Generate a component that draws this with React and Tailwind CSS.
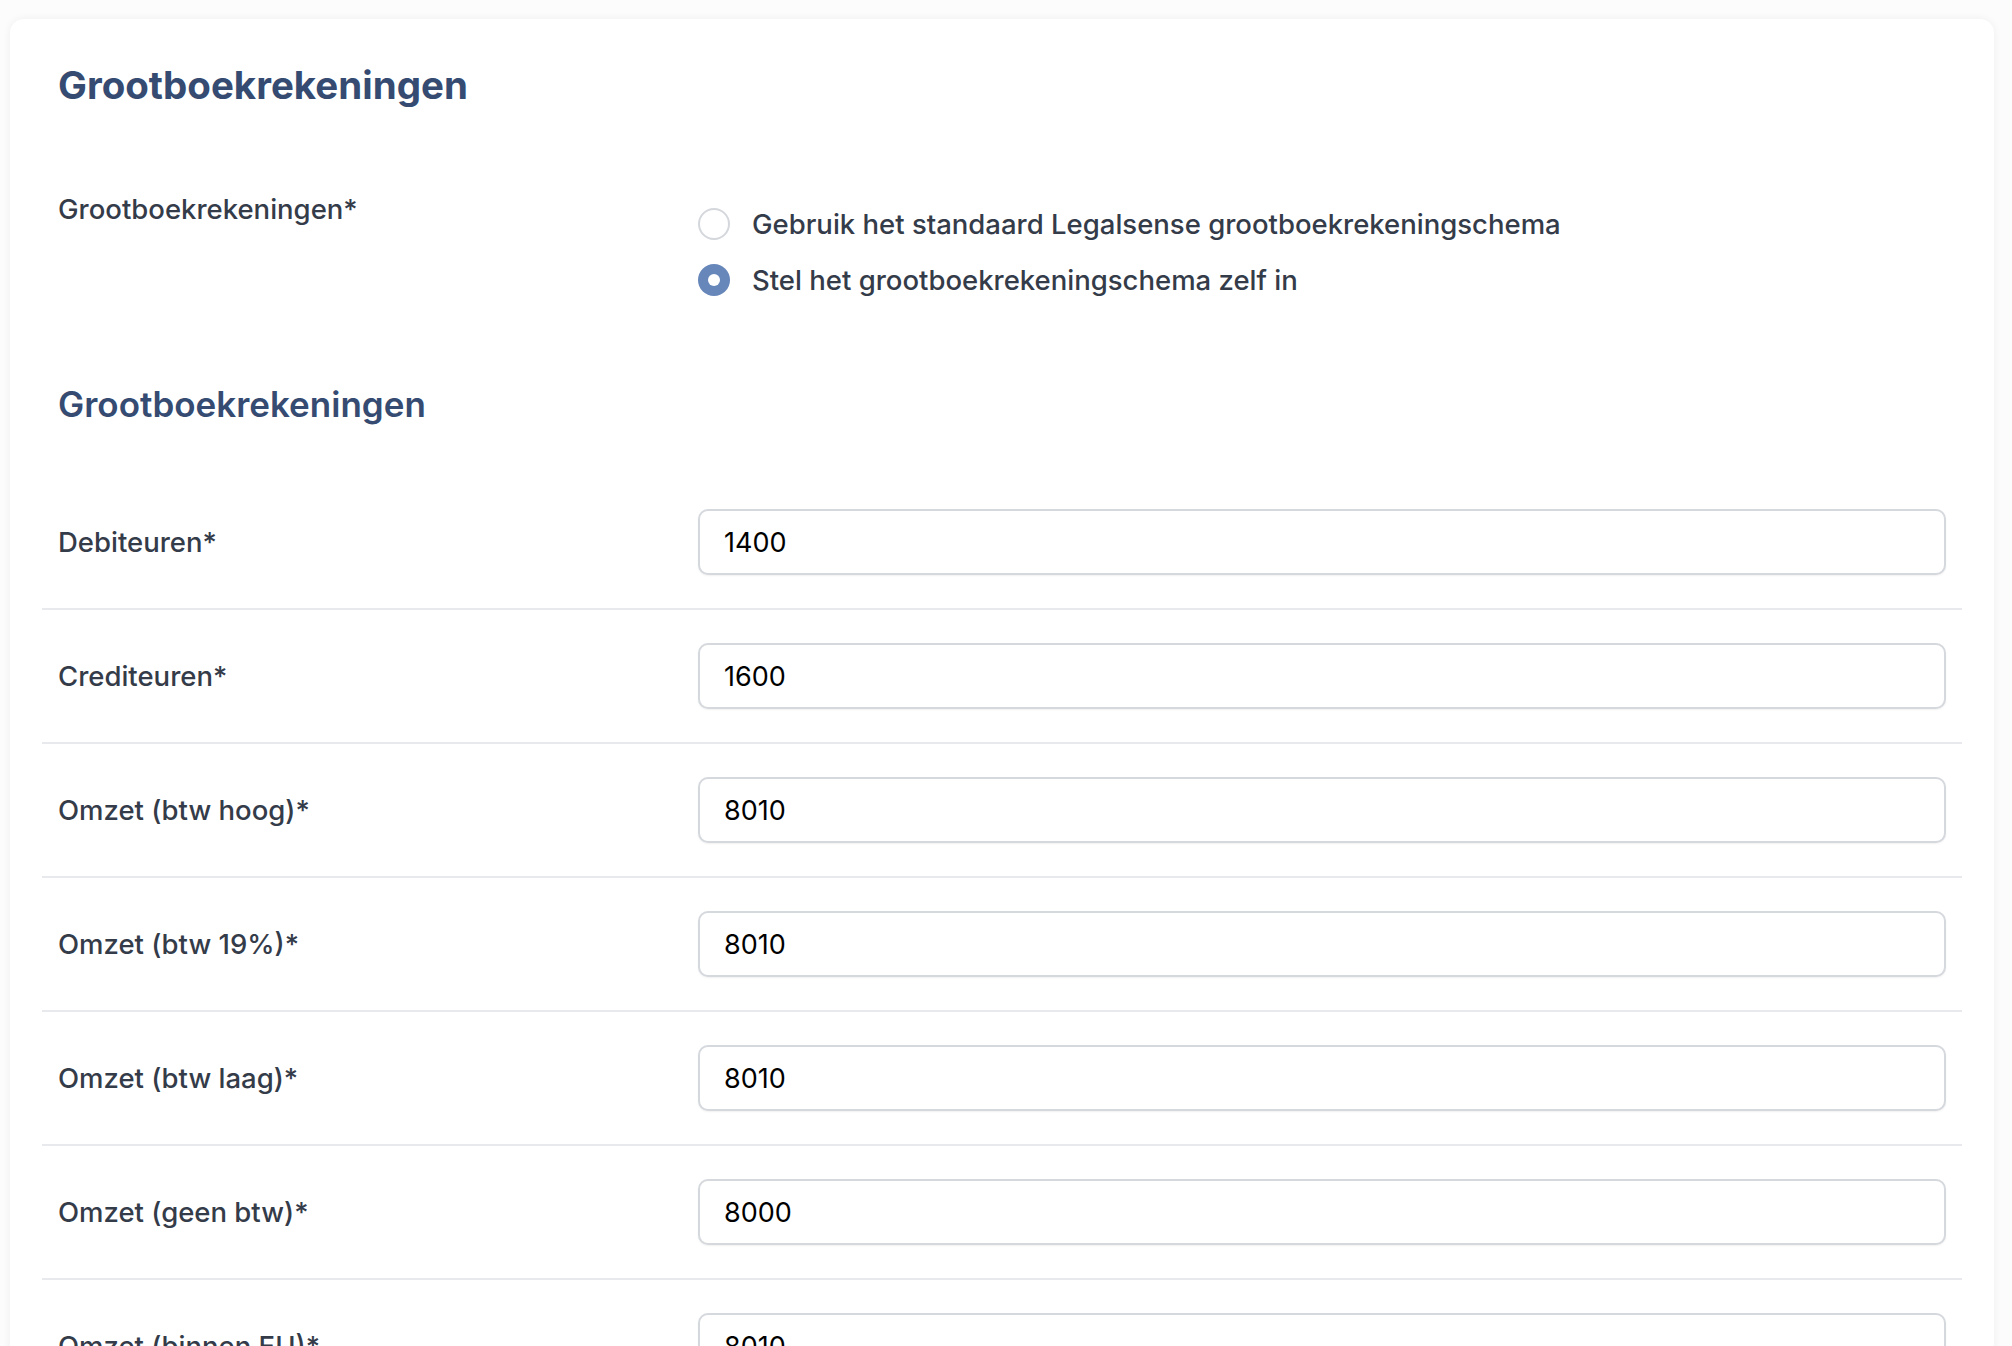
import React from "react";

const rows = [
  { label: "Debiteuren*", value: "1400" },
  { label: "Crediteuren*", value: "1600" },
  { label: "Omzet (btw hoog)*", value: "8010" },
  { label: "Omzet (btw 19%)*", value: "8010" },
  { label: "Omzet (btw laag)*", value: "8010" },
  { label: "Omzet (geen btw)*", value: "8000" },
  { label: "Omzet (binnen EU)*", value: "8010" },
];

const options = [
  { id: "standaard", text: "Gebruik het standaard Legalsense grootboekrekeningschema" },
  { id: "zelf", text: "Stel het grootboekrekeningschema zelf in" },
];

const Radio = ({ checked }) =>
  checked ? (
    <span className="flex h-8 w-8 shrink-0 items-center justify-center rounded-full bg-[#6787ba]">
      <span className="h-[12px] w-[12px] rounded-full bg-white" />
    </span>
  ) : (
    <span className="h-8 w-8 shrink-0 rounded-full border-2 border-[#d4d7dc] bg-white" />
  );

const App = () => {
  const [schema, setSchema] = React.useState("zelf");

  return (
    <div className="h-screen overflow-hidden bg-[#fcfcfc] pl-[10px] pr-[18px] pt-[19px] font-['Inter',sans-serif]">
      <div className="min-h-full rounded-[14px] bg-white px-8 pt-[42px] shadow-[0_0_8px_rgba(0,0,0,0.06)]">
        {/* Kop */}
        <h1 className="px-4 text-[38.5px] font-bold leading-[48px] text-[#354b71]">
          Grootboekrekeningen
        </h1>

        {/* Keuze schema */}
        <div className="mt-[82px] grid grid-cols-3 gap-8 px-4">
          <div className="text-[27.5px] font-medium leading-[36px] text-[#343b49]">
            Grootboekrekeningen*
          </div>
          <div className="col-span-2 flex flex-col gap-[20px] pt-[15px]">
            {options.map((o) => (
              <label
                key={o.id}
                className="flex cursor-pointer items-center gap-[22px]"
                onClick={() => setSchema(o.id)}
              >
                <Radio checked={schema === o.id} />
                <span className="text-[27.5px] font-medium leading-[36px] text-[#343b49]">
                  {o.text}
                </span>
              </label>
            ))}
          </div>
        </div>

        <h2 className="mt-[84px] px-4 text-[35px] font-semibold leading-[44px] text-[#354b71]">
          Grootboekrekeningen
        </h2>

        {/* Rekeningen */}
        <div className="mt-[50px]">
          {rows.map((r) => (
            <div
              key={r.label}
              className="grid grid-cols-3 items-center gap-8 border-b-2 border-[#e8e9ed] px-4 py-[33px]"
            >
              <div className="text-[27.5px] font-medium leading-[36px] text-[#343b49]">
                {r.label}
              </div>
              <input
                defaultValue={r.value}
                className="col-span-2 h-[66px] w-full rounded-[10px] border-2 border-[#d5d8dd] bg-white px-6 text-[27px] text-black shadow-[0_1px_2px_rgba(0,0,0,0.06)] outline-none"
              />
            </div>
          ))}
        </div>
      </div>
    </div>
  );
};

export default App;
